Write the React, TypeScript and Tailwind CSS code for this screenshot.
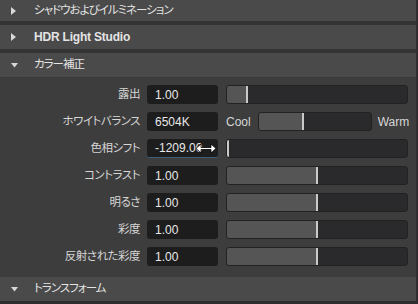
import React from "react";

const jp = "font-['Liberation_Sans','Noto_Sans_CJK_JP',sans-serif] [font-feature-settings:'palt']";

const Header = ({ title, open, bold, short }: { title: string; open?: boolean; bold?: boolean; short?: boolean }) => (
  <div className={`flex items-center bg-[#4a4a4a] pl-[11px] ${short ? "h-[21px]" : "h-6"}`}>
    {open ? (
      <svg width="7" height="5" viewBox="0 0 7 5" className="mr-4">
        <path d="M0 0 L7 0 L3.5 4.5 Z" fill="#d8d8d8" />
      </svg>
    ) : (
      <svg width="5" height="8" viewBox="0 0 5 8" className="mr-[18px]">
        <path d="M0 0 L5 4 L0 8 Z" fill="#d8d8d8" />
      </svg>
    )}
    <span
      className={`text-[#e4e4e4] ${bold ? "text-[12px] font-bold tracking-[-0.2px]" : "text-[11.5px] tracking-[-1px]"}`}
    >
      {title}
    </span>
  </div>
);

const Slider = ({ pos }: { pos: number }) => (
  <div className="relative h-[19px] flex-1 overflow-hidden rounded-[3px] border border-[#222] bg-[#2a2a2c]">
    <div className="absolute inset-y-0 left-0 bg-[#555]" style={{ width: `${pos}%` }} />
    <div className="absolute inset-y-0 w-[2px] bg-[#c9c9c9]" style={{ left: `${pos}%` }} />
  </div>
);

const Field = ({ value, focus }: { value: string; focus?: boolean }) => (
  <div
    className={`flex h-[19px] w-[71px] shrink-0 items-center rounded-[3px] bg-[#1d1d1d] pl-[8px] text-[12px] text-[#e8e8e8] ${
      focus ? "border-b border-[#3d5f7e]" : ""
    }`}
  >
    {value}
  </div>
);

const Row = ({ label, children }: { label: string; children: React.ReactNode }) => (
  <div className="flex h-[19px] items-center">
    <div className="w-[141px] shrink-0 pr-[1px] text-right text-[11.5px] tracking-[-0.5px] text-[#d6d6d6]">{label}</div>
    <div className="ml-[6px] flex flex-1 items-center">{children}</div>
  </div>
);

export default function App() {
  const rows = [
    { label: "コントラスト", pos: 49.5 },
    { label: "明るさ", pos: 49.5 },
    { label: "彩度", pos: 49.5 },
    { label: "反射された彩度", pos: 49.5 },
  ];

  return (
    <div className={`h-[304px] w-[418px] overflow-hidden bg-[#2e2e2e] ${jp}`}>
      <div className="mr-[2px] flex flex-col">
        <Header title="シャドウおよびイルミネーション" short />
        <div className="h-[4px] bg-[#343434]" />
        <Header title="HDR Light Studio" bold />
        <div className="h-[4px] bg-[#343434]" />
        <Header title="カラー補正" open />
        <div className="flex flex-col gap-[8px] border-t border-[#3a3a3a] bg-[#3d3d3d] pb-[11px] pl-0 pr-[8px] pt-[7px]">
          <Row label="露出">
            <Field value="1.00" />
            <div className="ml-[8px] flex flex-1">
              <Slider pos={10.5} />
            </div>
          </Row>
          <Row label="ホワイトバランス">
            <Field value="6504K" />
            <span className="ml-[8px] font-['Liberation_Sans',sans-serif] text-[12px] text-[#d6d6d6]">Cool</span>
            <div className="ml-[7px] flex w-[114px]">
              <Slider pos={39} />
            </div>
            <span className="ml-[6px] font-['Liberation_Sans',sans-serif] text-[12px] text-[#d6d6d6]">Warm</span>
          </Row>
          <Row label="色相シフト">
            <div className="relative">
              <Field value="-1209.00" focus />
              <svg width="22" height="11" viewBox="0 0 22 11" className="absolute left-[48px] top-[4px]">
                <path
                  d="M1 5.5 L6 1 L6 4.5 L16 4.5 L16 1 L21 5.5 L16 10 L16 6.5 L6 6.5 L6 10 Z"
                  fill="#fff"
                  stroke="#000"
                  strokeWidth="0.8"
                />
              </svg>
            </div>
            <div className="ml-[8px] flex flex-1">
              <Slider pos={0} />
            </div>
          </Row>
          {rows.map((r) => (
            <Row key={r.label} label={r.label}>
              <Field value="1.00" />
              <div className="ml-[8px] flex flex-1">
                <Slider pos={r.pos} />
              </div>
            </Row>
          ))}
        </div>
        <Header title="トランスフォーム" open />
      </div>
    </div>
  );
}
